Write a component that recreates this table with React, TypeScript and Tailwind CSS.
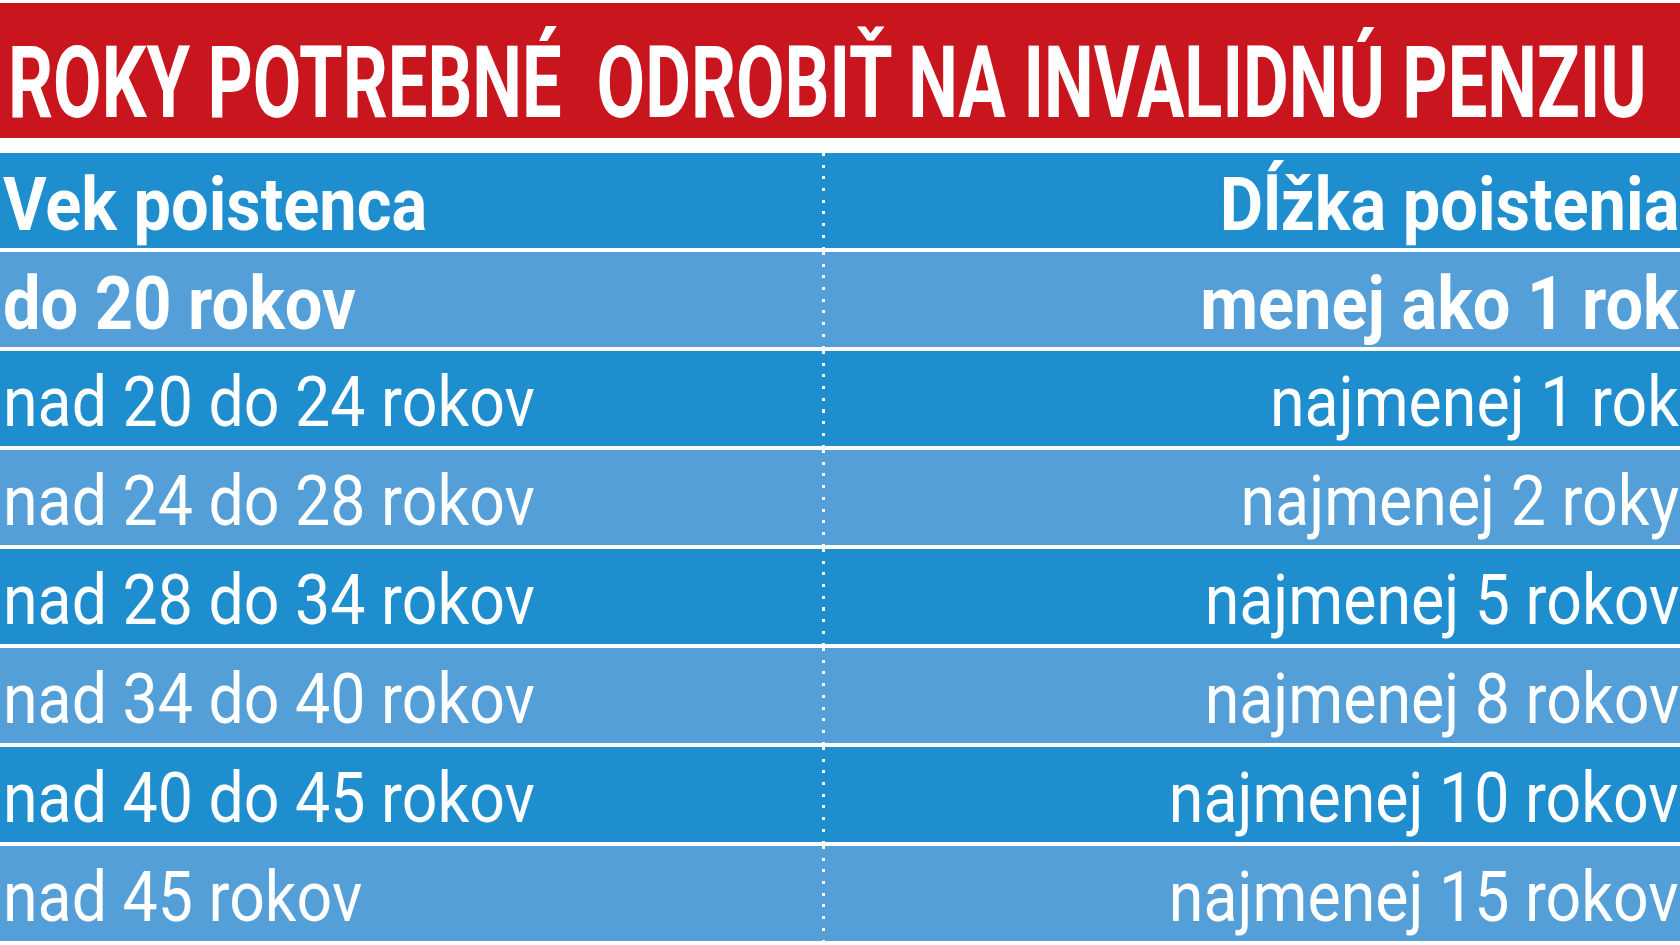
import React from 'react';

interface Row {
  age: string;
  length: string;
}

const rows: Row[] = [
  { age: 'do 20 rokov', length: 'menej ako 1 rok' },
  { age: 'nad 20 do 24 rokov', length: 'najmenej 1 rok' },
  { age: 'nad 24 do 28 rokov', length: 'najmenej 2 roky' },
  { age: 'nad 28 do 34 rokov', length: 'najmenej 5 rokov' },
  { age: 'nad 34 do 40 rokov', length: 'najmenej 8 rokov' },
  { age: 'nad 40 do 45 rokov', length: 'najmenej 10 rokov' },
  { age: 'nad 45 rokov', length: 'najmenej 15 rokov' },
];

function TableRow({ left, right, bold, dark }: { left: string; right: string; bold: boolean; dark: boolean }) {
  const text = bold
    ? 'font-bold text-[75px] scale-x-[0.89]'
    : 'font-normal text-[70px] scale-x-[0.895]';
  return (
    <div className={`flex h-[95px] shrink-0 ${dark ? 'bg-[#1e8ecf]' : 'bg-[#549fd7]'}`}>
      <div className="flex w-[822px] shrink-0 items-start pl-[3px] pt-[4px]">
        <span className={`inline-block origin-left whitespace-nowrap leading-[95px] text-white ${text}`}>
          {left}
        </span>
      </div>
      {/* dotted divider */}
      <div className="w-[3px] shrink-0 bg-[repeating-linear-gradient(to_bottom,#ffffff_0_3px,transparent_3px_11.7px)]" />
      <div className="flex flex-1 items-start justify-end pr-[1px] pt-[4px]">
        <span className={`inline-block origin-right whitespace-nowrap leading-[95px] text-white ${text}`}>
          {right}
        </span>
      </div>
    </div>
  );
}

export default function App() {
  return (
    <div className="h-[945px] w-[1680px] overflow-hidden bg-white pt-[3px] font-['Roboto',sans-serif]">
      {/* Title */}
      <div className="h-[135px] bg-[#c9151d] pl-[8px] pt-[29px]">
        <h1 className="inline-block origin-left scale-x-[0.697] whitespace-pre text-[101px] font-bold leading-none text-white">
          ROKY POTREBNÉ  ODROBIŤ NA INVALIDNÚ PENZIU
        </h1>
      </div>

      {/* Table */}
      <div className="mt-[15px] flex flex-col gap-[4px]">
        <TableRow left="Vek poistenca" right="Dĺžka poistenia" bold dark />
        {rows.map((r, i) => (
          <TableRow key={r.age} left={r.age} right={r.length} bold={i === 0} dark={i % 2 === 1} />
        ))}
      </div>
    </div>
  );
}
